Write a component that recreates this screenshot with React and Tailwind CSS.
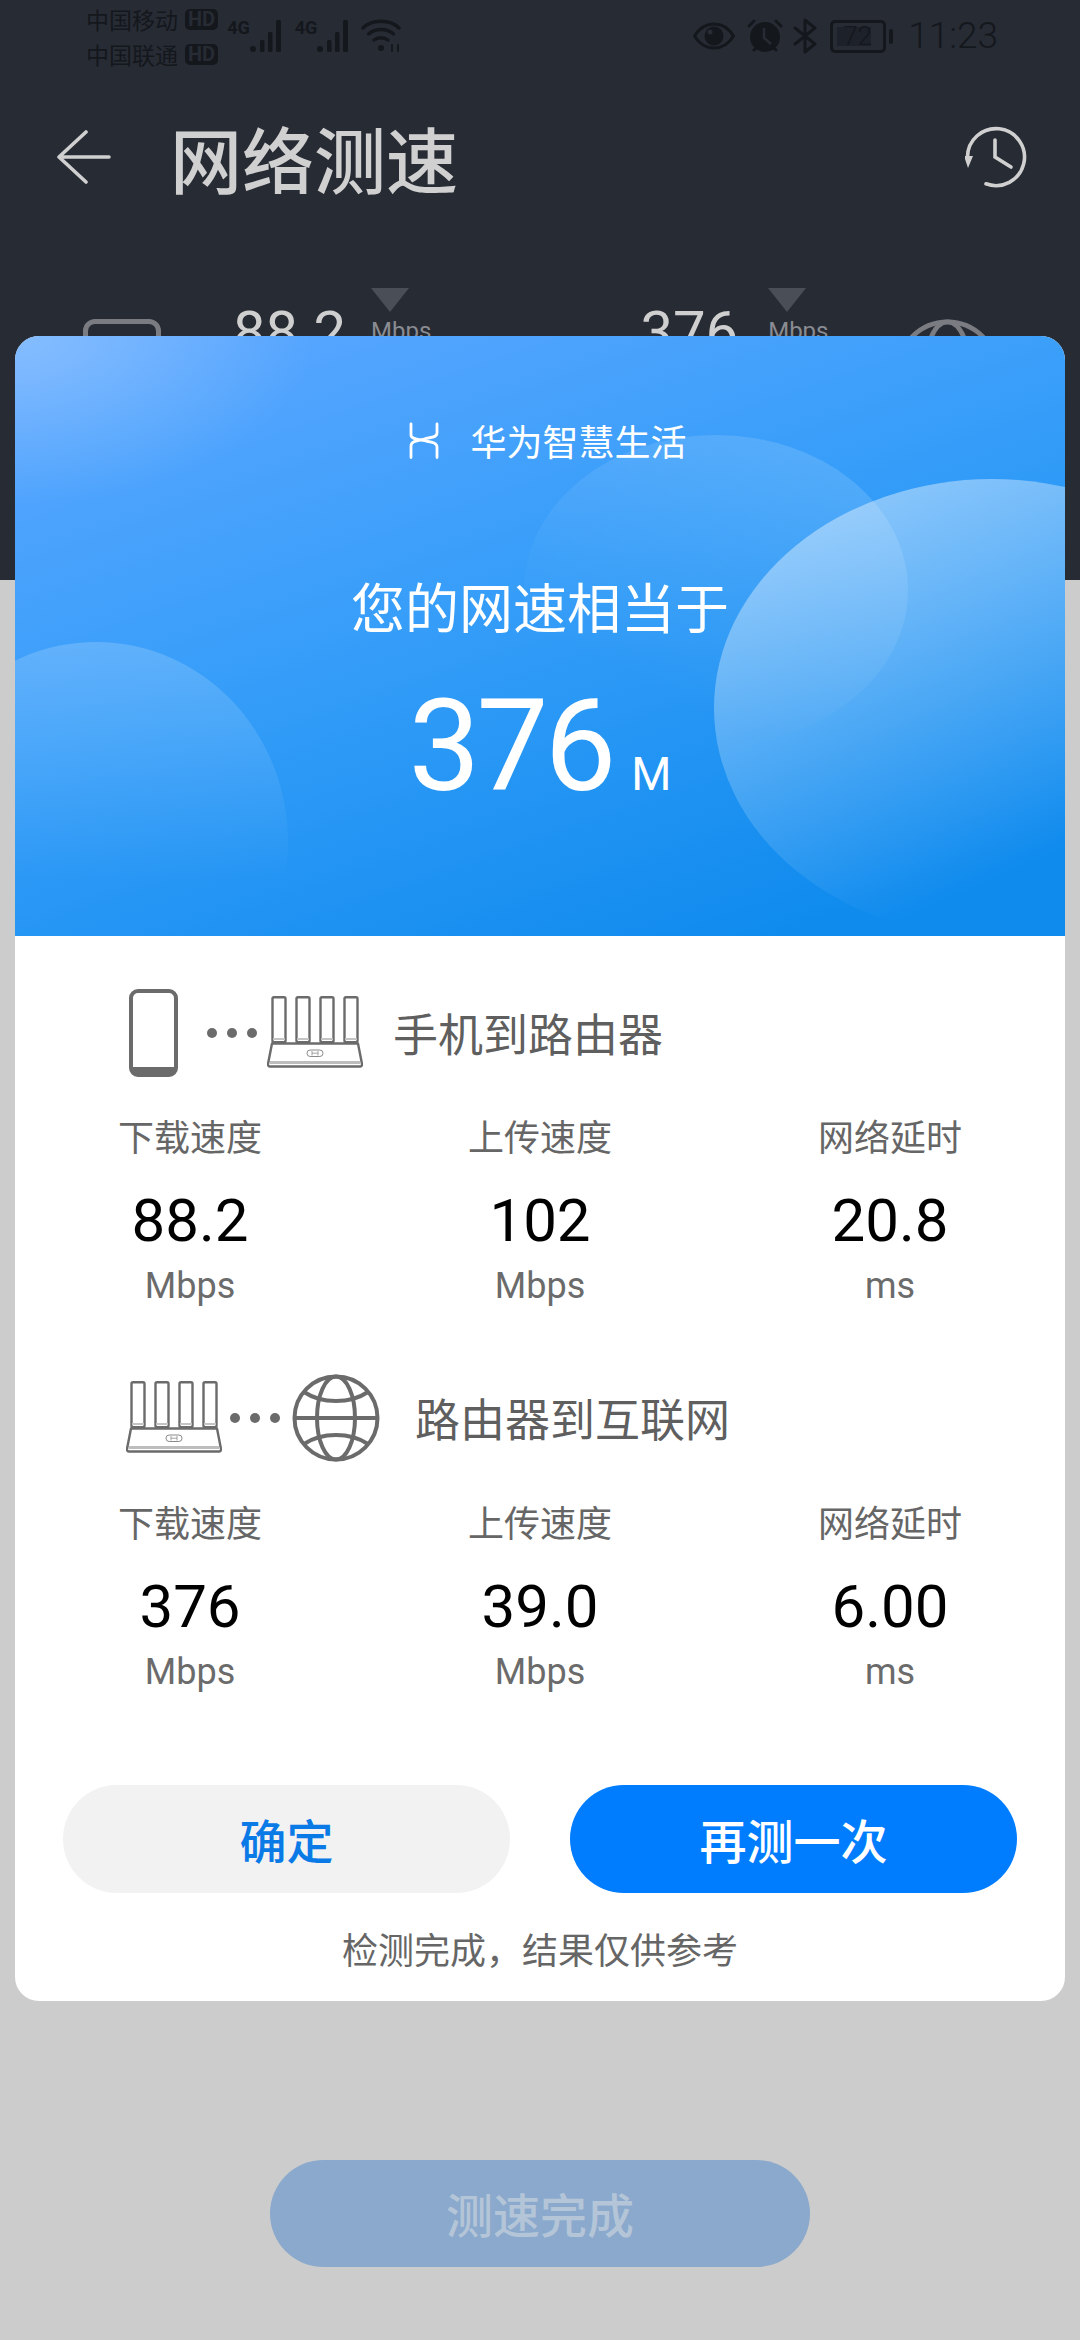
import React from "react";

const CJK = "font-['Noto_Sans_CJK_SC','Noto_Sans',sans-serif]";
const NUM = "font-['Roboto','Noto_Sans_CJK_SC',sans-serif]";

function Bars() {
  return (
    <svg width="36" height="34" viewBox="0 0 36 34" fill="#14171c">
      <circle cx="3" cy="30" r="3" />
      <rect x="10" y="21" width="4.5" height="12" rx="1.5" />
      <rect x="18" y="13" width="4.5" height="20" rx="1.5" />
      <rect x="26" y="1" width="5" height="32" rx="1.5" />
    </svg>
  );
}

function Router({ className }) {
  return (
    <svg className={className} width="96" height="72" viewBox="0 0 96 72" fill="none" stroke="#6b6b6b" strokeWidth="2.4" strokeLinejoin="round">
      {[5, 29, 53, 77].map((x) => (
        <g key={x}>
          <rect x={x + 0.5} y="1.2" width="13" height="45" rx="1.5" />
          <line x1={x + 1} y1="43" x2={x + 13} y2="43" stroke="#c4c4c4" strokeWidth="2" />
        </g>
      ))}
      <path d="M5 47.5H91L95 68a2 2 0 0 1-2 2.5H3A2 2 0 0 1 1 68Z" />
      <line x1="3" y1="66.5" x2="93" y2="66.5" stroke="#bdbdbd" strokeWidth="3" />
      <rect x="40" y="54" width="16" height="6.5" rx="3.2" strokeWidth="1" stroke="#8a8a8a" />
      <path d="M45 55v4.5M51 55v4.5M45 57.2h6" strokeWidth="0.8" stroke="#8a8a8a" />
    </svg>
  );
}

function Globe({ size = 88, color = "#6b6b6b" }) {
  return (
    <svg width={size} height={size} viewBox="0 0 88 88" fill="none" stroke={color} strokeWidth="4">
      <circle cx="44" cy="44" r="41.5" />
      <ellipse cx="44" cy="44" rx="19" ry="41.5" />
      <line x1="2" y1="44" x2="86" y2="44" />
      <path d="M12 18c9 6 20 9 32 9s23-3 32-9" />
      <path d="M12 70c9-6 20-9 32-9s23 3 32 9" />
    </svg>
  );
}

function Dots({ className }) {
  return (
    <div className={"flex gap-[10px] " + className}>
      <span className="w-[10px] h-[10px] rounded-full bg-[#6b6b6b]" />
      <span className="w-[10px] h-[10px] rounded-full bg-[#6b6b6b]" />
      <span className="w-[10px] h-[10px] rounded-full bg-[#6b6b6b]" />
    </div>
  );
}

function Stats({ items, className }) {
  return (
    <div className={"grid grid-cols-3 " + className}>
      {items.map(([label, value, unit]) => (
        <div key={label} className="flex flex-col items-center">
          <div className={CJK + " text-[36px] leading-[48px] text-[#666666]"}>{label}</div>
          <div className={NUM + " mt-[24px] text-[60px] leading-[76px] text-black"}>{value}</div>
          <div className={NUM + " mt-[3px] text-[36px] leading-[48px] text-[#6b6b6b]"}>{unit}</div>
        </div>
      ))}
    </div>
  );
}

function Hero() {
  return (
    <div className="relative h-[600px] overflow-hidden flex flex-col items-center text-white">
      <svg className="absolute inset-0" width="1050" height="600" viewBox="0 0 1050 600">
        <defs>
          <linearGradient id="base" x1="0.12" y1="0" x2="0.72" y2="1">
            <stop offset="0" stopColor="#5aa6ff" />
            <stop offset="0.45" stopColor="#379ef9" />
            <stop offset="1" stopColor="#0f8bee" />
          </linearGradient>
          <radialGradient id="corner" cx="0" cy="0" r="1" gradientUnits="userSpaceOnUse" gradientTransform="translate(0 0) scale(300 170)">
            <stop offset="0" stopColor="#ffffff" stopOpacity="0.26" />
            <stop offset="1" stopColor="#ffffff" stopOpacity="0" />
          </radialGradient>
          <linearGradient id="c3" x1="0.15" y1="0.1" x2="0.55" y2="0.85">
            <stop offset="0" stopColor="#ffffff" stopOpacity="0.42" />
            <stop offset="1" stopColor="#ffffff" stopOpacity="0" />
          </linearGradient>
          <linearGradient id="c2" x1="0.8" y1="0" x2="0.3" y2="0.8">
            <stop offset="0" stopColor="#ffffff" stopOpacity="0.15" />
            <stop offset="1" stopColor="#ffffff" stopOpacity="0" />
          </linearGradient>
          <linearGradient id="c1" x1="0.5" y1="0" x2="0.5" y2="0.6">
            <stop offset="0" stopColor="#ffffff" stopOpacity="0.18" />
            <stop offset="1" stopColor="#ffffff" stopOpacity="0" />
          </linearGradient>
        </defs>
        <rect width="1050" height="600" fill="url(#base)" />
        <rect width="1050" height="600" fill="url(#corner)" />
        <ellipse cx="701" cy="254" rx="192" ry="155" fill="url(#c2)" />
        <ellipse cx="81" cy="506" rx="192" ry="200" fill="url(#c1)" />
        <ellipse cx="977" cy="372" rx="278" ry="229" fill="url(#c3)" />
      </svg>
      <div className="relative mt-[77px] h-[54px] flex items-center gap-[31px] ml-[16px]">
        <svg width="30" height="37" viewBox="0 0 30 37" fill="none" stroke="#fff" strokeWidth="2.800" strokeLinecap="round">
          <path d="M2 2V13C2 17 8 17 14 18.500C21 20 28 20 28 25V35.500" />
          <path d="M28 2V11C28 16 21 15 15 17C8 19 2 19 2 24V35.500" />
        </svg>
        <span className={CJK + " text-[36px] leading-[54px]"}>华为智慧生活</span>
      </div>
      <div className={CJK + " relative mt-[101px] text-[54px] leading-[76px]"}>您的网速相当于</div>
      <div className="relative mt-[38px] flex items-baseline gap-[19px]">
        <span className={NUM + " text-[128px] leading-[128px] tracking-[-4px]"}>376</span>
        <span className={NUM + " text-[46px] leading-[48px]"}>M</span>
      </div>
    </div>
  );
}

export default function App() {
  return (
    <div className="relative w-[1080px] h-[2340px] overflow-hidden bg-[#cccccc] flex flex-col">
      <div className="h-[580px] bg-[#272b34] shrink-0 overflow-hidden">
        {/* status bar */}
        <div className="h-[70px] flex items-start pl-[86px] pr-[82px] text-[#14171c]">
          <div className={CJK + " flex flex-col text-[23px] leading-[35px] mt-[2px]"}>
            <div className="flex items-center gap-[7px]">
              <span>中国移动</span>
              <span className={NUM + " bg-[#14171c] text-[#272b34] rounded-[5px] px-[3px] text-[20px] leading-[21px] font-bold"}>HD</span>
            </div>
            <div className="flex items-center gap-[7px]">
              <span>中国联通</span>
              <span className={NUM + " bg-[#14171c] text-[#272b34] rounded-[5px] px-[3px] text-[20px] leading-[21px] font-bold"}>HD</span>
            </div>
          </div>
          <div className="flex items-start mt-[19px] ml-[9px]">
            <span className={NUM + " text-[18px] leading-[18px] font-bold"}>4G</span>
            <Bars />
            <span className={NUM + " text-[18px] leading-[18px] font-bold ml-[9px]"}>4G</span>
            <Bars />
            <svg className="ml-[8px]" width="42" height="34" viewBox="0 0 42 34" fill="none" stroke="#14171c" strokeWidth="3.400" strokeLinecap="round">
              <path d="M2 9C11 0 29 0 38 9" />
              <path d="M7.500 15c7-6 18-6 25 0" />
              <path d="M13 21c4-3 10-3 14 0" />
              <circle cx="20" cy="29" r="3" fill="#14171c" stroke="none" />
              <path d="M31 26v6M37 26v6" strokeWidth="2" />
            </svg>
          </div>
          <div className="ml-auto flex items-center mt-[19px] h-[34px]">
            <svg width="42" height="28" viewBox="0 0 42 28">
              <path d="M1.500 14C7 5 14 2 21 2s14 3 19.500 12C35 23 28 26 21 26S7 23 1.500 14Z" fill="none" stroke="#14171c" strokeWidth="3" />
              <circle cx="21" cy="14" r="9.500" fill="#14171c" />
              <circle cx="17" cy="10" r="2.500" fill="#272b34" />
            </svg>
            <svg className="ml-[12px]" width="36" height="34" viewBox="0 0 36 34">
              <circle cx="18" cy="18" r="15" fill="#14171c" />
              <path d="M17 9v10l7 6" fill="none" stroke="#272b34" strokeWidth="2.500" />
              <path d="M2 7l5-5M34 7l-5-5M7 31l3-3M29 31l-3-3" stroke="#14171c" strokeWidth="3" strokeLinecap="round" />
            </svg>
            <svg className="ml-[10px]" width="25" height="36" viewBox="0 0 25 36" fill="none" stroke="#14171c" strokeWidth="3" strokeLinecap="round" strokeLinejoin="round">
              <path d="M2 10l20 16-10 8V2l10 8L2 26" />
            </svg>
            <div className={NUM + " relative ml-[12px] w-[56px] h-[33px] border-[3px] border-[#14171c] rounded-[5px] flex items-center"}>
              <div className="absolute left-[4px] top-[4px] bottom-[4px] w-[34px] bg-[#1d2129]" />
              <span className="relative pl-[10px] text-[26px] leading-[27px] font-light">72</span>
            </div>
            <span className="ml-[3px] w-[4px] h-[15px] bg-[#14171c] rounded-[2px]" />
            <span className={NUM + " ml-[15px] text-[37px] leading-[34px] font-light"}>11:23</span>
          </div>
        </div>
        {/* header */}
        <div className="h-[90px] mt-[42px] pl-[57px] pr-[53px] flex items-center">
          <svg width="54" height="54" viewBox="0 0 54 54" fill="none" stroke="#d0d0d0" strokeWidth="3.600" strokeLinecap="round" strokeLinejoin="round">
            <path d="M29 2L2 27l27 25M2 27h50" />
          </svg>
          <span className={CJK + " ml-[59px] text-[72px] leading-[90px] font-medium text-[#d0d0d0]"}>网络测速</span>
          <svg className="ml-auto" width="62" height="62" viewBox="0 0 62 62" fill="none" stroke="#d0d0d0" strokeWidth="3.600" strokeLinecap="round">
            <path d="M2.500 31A28.500 28.500 0 1 1 21 57.800" />
            <path d="M30 14v17l16 10" />
            <path d="M-1 30h9l-5 12Z" fill="#d0d0d0" stroke="none" />
          </svg>
        </div>
        {/* summary row hidden behind the dialog */}
        <div className="relative mt-[86px] h-[120px] pl-[83px] pr-[80px] flex items-start text-[#cfcfcf]">
          <div className="mt-[31px] w-[78px] h-[100px] border-[5px] border-[#7a7c82] rounded-[12px]" />
          <span className={NUM + " ml-[72px] mt-[11px] text-[58px] leading-[66px]"}>88.2</span>
          <div className="ml-[25px] flex flex-col items-start text-[#8a8c92]">
            <span className="w-0 h-0 border-l-[19px] border-r-[19px] border-t-[24px] border-l-transparent border-r-transparent border-t-[#4a4e57]" />
            <span className={NUM + " text-[24px] leading-[30px] mt-[4px]"}>Mbps</span>
          </div>
          <span className={NUM + " ml-[209px] mt-[11px] text-[58px] leading-[66px]"}>376</span>
          <div className="ml-[30px] flex flex-col items-start text-[#8a8c92]">
            <span className="w-0 h-0 border-l-[19px] border-r-[19px] border-t-[24px] border-l-transparent border-r-transparent border-t-[#4a4e57]" />
            <span className={NUM + " text-[24px] leading-[30px] mt-[4px]"}>Mbps</span>
          </div>
          <div className="ml-auto mt-[31px]">
            <Globe size={105} color="#7a7c82" />
          </div>
        </div>
      </div>

      <div className="flex-1 flex flex-col items-center justify-end pb-[73px]">
        <button className={CJK + " w-[540px] h-[107px] rounded-full bg-[#8aa9cc] text-[#b5c5d8] text-[47px] font-medium"}>测速完成</button>
      </div>

      {/* dialog */}
      <div className="absolute left-[15px] top-[336px] w-[1050px] rounded-[24px] overflow-hidden bg-white">
        <Hero />
        <div className="flex flex-col">
          <div className="mt-[52px] h-[90px] flex items-center pl-[114px]">
            <div className="relative w-[49px] h-[88px] border-[4px] border-b-[10px] border-[#6b6b6b] rounded-[9px]" />
            <Dots className="ml-[29px]" />
            <Router className="ml-[10px] mt-[-2px]" />
            <span className={CJK + " ml-[30px] text-[45px] leading-[60px] text-[#5f5f5f]"}>手机到路由器</span>
          </div>
          <Stats className="mt-[33px]" items={[["下载速度", "88.2", "Mbps"], ["上传速度", "102", "Mbps"], ["网络延时", "20.8", "ms"]]} />
          <div className="mt-[63px] h-[90px] flex items-center pl-[111px]">
            <Router className="mt-[-2px]" />
            <Dots className="ml-[8px]" />
            <div className="ml-[12px]"><Globe /></div>
            <span className={CJK + " ml-[35px] text-[45px] leading-[60px] text-[#5f5f5f]"}>路由器到互联网</span>
          </div>
          <Stats className="mt-[34px]" items={[["下载速度", "376", "Mbps"], ["上传速度", "39.0", "Mbps"], ["网络延时", "6.00", "ms"]]} />
          <div className="mt-[89px] flex justify-between px-[48px]">
            <button className={CJK + " w-[447px] h-[108px] rounded-full bg-[#f2f2f2] text-[#0a7ae6] text-[47px] font-medium"}>确定</button>
            <button className={CJK + " w-[447px] h-[108px] rounded-full bg-[#007dff] text-white text-[47px] font-medium"}>再测一次</button>
          </div>
          <div className={CJK + " mt-[31px] mb-[29px] text-center text-[36px] leading-[48px] text-[#666666]"}>检测完成，结果仅供参考</div>
        </div>
      </div>
    </div>
  );
}
